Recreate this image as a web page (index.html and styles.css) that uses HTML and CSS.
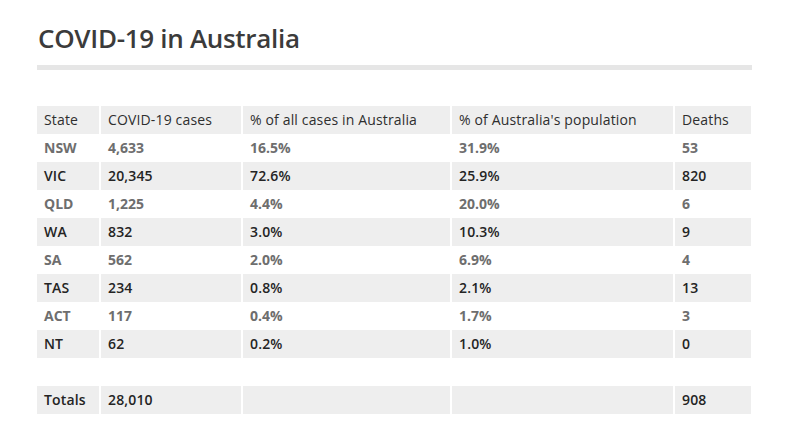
FILE: index.html
```html
<!DOCTYPE html>
<html>
<head>
<meta charset="utf-8">
<link rel="stylesheet" href="styles.css">
</head>
<body>
<main class="page">
  <h1 class="title">COVID-19 in Australia</h1>
  <div class="rule"></div>
  <table class="stats">
    <colgroup>
      <col class="c1"><col class="c2"><col class="c3"><col class="c4"><col class="c5">
    </colgroup>
    <thead>
      <tr><th>State</th><th>COVID-19 cases</th><th>% of all cases in Australia</th><th>% of Australia's population</th><th>Deaths</th></tr>
    </thead>
    <tbody>
      <tr><td>NSW</td><td>4,633</td><td>16.5%</td><td>31.9%</td><td>53</td></tr>
      <tr><td>VIC</td><td>20,345</td><td>72.6%</td><td>25.9%</td><td>820</td></tr>
      <tr><td>QLD</td><td>1,225</td><td>4.4%</td><td>20.0%</td><td>6</td></tr>
      <tr><td>WA</td><td>832</td><td>3.0%</td><td>10.3%</td><td>9</td></tr>
      <tr><td>SA</td><td>562</td><td>2.0%</td><td>6.9%</td><td>4</td></tr>
      <tr><td>TAS</td><td>234</td><td>0.8%</td><td>2.1%</td><td>13</td></tr>
      <tr><td>ACT</td><td>117</td><td>0.4%</td><td>1.7%</td><td>3</td></tr>
      <tr><td>NT</td><td>62</td><td>0.2%</td><td>1.0%</td><td>0</td></tr>
      <tr class="blank"><td></td><td></td><td></td><td></td><td></td></tr>
      <tr><td>Totals</td><td>28,010</td><td></td><td></td><td>908</td></tr>
    </tbody>
  </table>
</main>
</body>
</html>
```
FILE: styles.css
```css
html, body {
  margin: 0;
  padding: 0;
  background: #fff;
}
body {
  font-family: "Open Sans", "DejaVu Sans", sans-serif;
  color: #333;
}
.page {
  padding: 18px 0 0 37px;
  width: 715px;
}
.title {
  margin: 0 0 0 1px;
  font-size: 26px;
  line-height: 40px;
  font-weight: 600;
  color: #3b3b3b;
  letter-spacing: -0.3px;
}
.rule {
  margin-top: 7px;
  height: 5px;
  background: #e6e6e6;
}
.stats {
  margin-top: 36px;
  width: 714px;
  border-collapse: collapse;
  table-layout: fixed;
  font-size: 14px;
  letter-spacing: 0.15px;
}
.c1 { width: 63px; }
.c2 { width: 142px; }
.c3 { width: 209px; }
.c4 { width: 223px; }
.c5 { width: 77px; }
.stats th, .stats td {
  height: 28px;
  padding: 0 0 1px 7px;
  text-align: left;
  box-sizing: border-box;
  white-space: nowrap;
}
.stats th + th, .stats td + td {
  border-left: 2px solid #fff;
}
.stats th {
  font-weight: 500;
  color: #2e2e2e;
  background: #eee;
}
.stats td {
  font-weight: 700;
  letter-spacing: 0;
  color: #6e6e6e;
}
.stats tbody tr:nth-child(even) td {
  font-weight: 600;
  letter-spacing: 0.15px;
  background: #eee;
  color: #242424;
}
.stats .blank td {
  background: #fff;
}
```
